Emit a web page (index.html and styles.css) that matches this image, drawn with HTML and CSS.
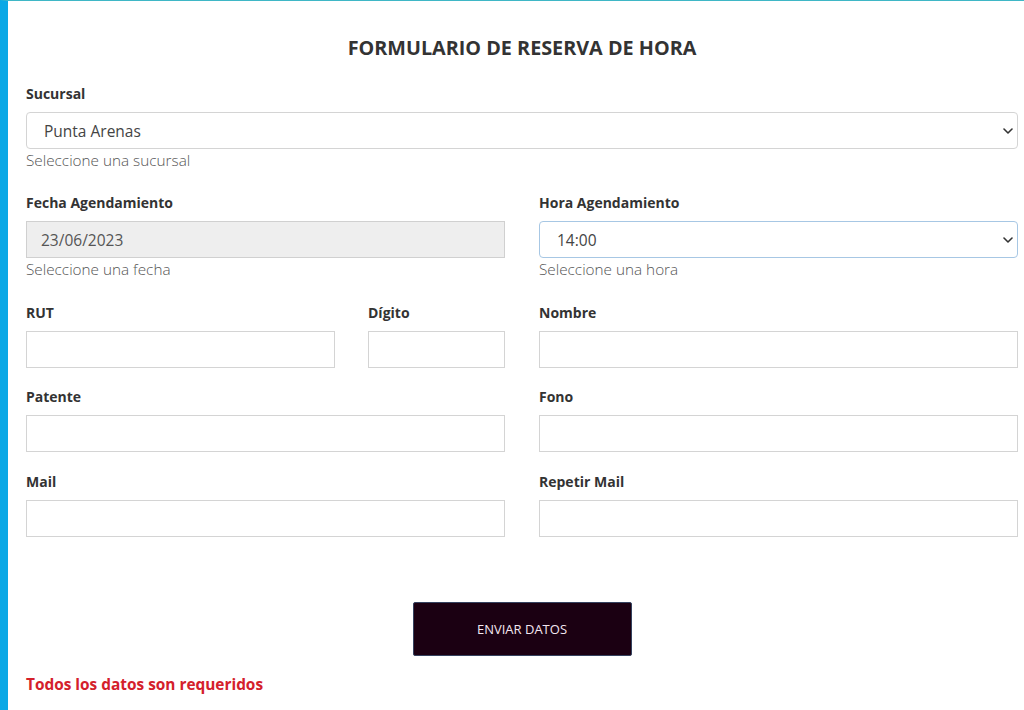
FILE: index.html
```html
<!DOCTYPE html>
<html lang="es">
<head>
<meta charset="utf-8">
<title>Formulario de reserva de hora</title>
<link rel="stylesheet" href="styles.css">
</head>
<body>
<div class="page">
  <main class="content">
    <h1 class="title">FORMULARIO DE RESERVA DE HORA</h1>

    <div class="field first">
      <label class="label">Sucursal</label>
      <div class="select-wrap">
        <select class="control select"><option>Punta Arenas</option></select>
        <svg class="chevron" width="10" height="6" viewBox="0 0 10 6"><path d="M1 1l4 4 4-4" fill="none" stroke="#333" stroke-width="1.6" stroke-linecap="round" stroke-linejoin="round"/></svg>
      </div>
      <div class="help">Seleccione una sucursal</div>
    </div>

    <div class="row row-date">
      <div class="field">
        <label class="label">Fecha Agendamiento</label>
        <input class="control readonly" type="text" value="23/06/2023" readonly>
        <div class="help">Seleccione una fecha</div>
      </div>
      <div class="field">
        <label class="label">Hora Agendamiento</label>
        <div class="select-wrap">
          <select class="control select focus"><option>14:00</option></select>
          <svg class="chevron" width="10" height="6" viewBox="0 0 10 6"><path d="M1 1l4 4 4-4" fill="none" stroke="#333" stroke-width="1.6" stroke-linecap="round" stroke-linejoin="round"/></svg>
        </div>
        <div class="help">Seleccione una hora</div>
      </div>
    </div>

    <div class="row row-rut">
      <div class="rut">
        <div class="field">
          <label class="label">RUT</label>
          <input class="control" type="text">
        </div>
        <div class="field">
          <label class="label">Dígito</label>
          <input class="control" type="text">
        </div>
      </div>
      <div class="field">
        <label class="label">Nombre</label>
        <input class="control" type="text">
      </div>
    </div>

    <div class="row row-patente">
      <div class="field">
        <label class="label">Patente</label>
        <input class="control" type="text">
      </div>
      <div class="field">
        <label class="label">Fono</label>
        <input class="control" type="text">
      </div>
    </div>

    <div class="row row-mail">
      <div class="field">
        <label class="label">Mail</label>
        <input class="control" type="text">
      </div>
      <div class="field">
        <label class="label">Repetir Mail</label>
        <input class="control" type="text">
      </div>
    </div>

    <div class="actions">
      <button class="btn" type="button">ENVIAR DATOS</button>
    </div>

    <p class="required">Todos los datos son requeridos</p>
  </main>
</div>
</body>
</html>
```

FILE: styles.css
```css
* { box-sizing: border-box; }
html, body { margin: 0; padding: 0; }
body {
  font-family: "Open Sans", "Noto Sans", sans-serif;
  color: #333;
  background: #fff;
  width: 1024px;
  height: 710px;
  overflow: hidden;
}
.page {
  height: 710px;
  border-left: 8px solid #0aa8e6;
  border-top: 1px solid #3fb7c6;
}
.content {
  padding: 0 6px 0 18px;
}
.title {
  margin: 0;
  padding-top: 33px;
  text-align: center;
  font-size: 19.8px;
  font-weight: 700;
  line-height: 27px;
  color: #333;
}
.field {
  display: flex;
  flex-direction: column;
}
.field.first { margin-top: 23px; }
.label {
  font-size: 14px;
  font-weight: 700;
  line-height: 20px;
  color: #333;
  margin-bottom: 8px;
}
.control {
  display: block;
  width: 100%;
  height: 37px;
  border: 1px solid #d4d4d4;
  border-radius: 0;
  padding: 0 13px;
  font-family: "Open Sans", "Noto Sans", sans-serif;
  font-size: 15.5px;
  color: #555;
  background: #fff;
  outline: none;
}
.select {
  appearance: none;
  -webkit-appearance: none;
  border-radius: 4px;
  padding-left: 17px;
  color: #444;
}
.select.focus { border-color: #a7c7e4; }
.readonly { background: #eee; border-color: #d0d0d0; padding-left: 14px; }
.select-wrap { position: relative; }
.chevron {
  position: absolute;
  right: 5px;
  top: 16px;
}
.help {
  font-size: 15.3px;
  font-weight: 300;
  line-height: 23px;
  color: #555;
}
.row {
  display: grid;
  grid-template-columns: 1fr 1fr;
  column-gap: 34px;
}
.row-date { margin-top: 21px; }
.row-rut { margin-top: 22px; }
.row-patente { margin-top: 19px; }
.row-mail { margin-top: 20px; }
.rut {
  display: grid;
  grid-template-columns: 309px 137px;
  column-gap: 33px;
}
.actions {
  display: flex;
  justify-content: center;
  margin-top: 65px;
}
.btn {
  width: 219px;
  height: 54px;
  background: #1b0012;
  border: 1px solid #35425f;
  border-radius: 2px;
  color: #f3e6f0;
  font-family: "Open Sans", "Noto Sans", sans-serif;
  font-size: 13px;
  font-weight: 400;
}
.required {
  margin: 18px 0 0;
  font-size: 15.4px;
  font-weight: 700;
  line-height: 22px;
  color: #d4202b;
}
```
